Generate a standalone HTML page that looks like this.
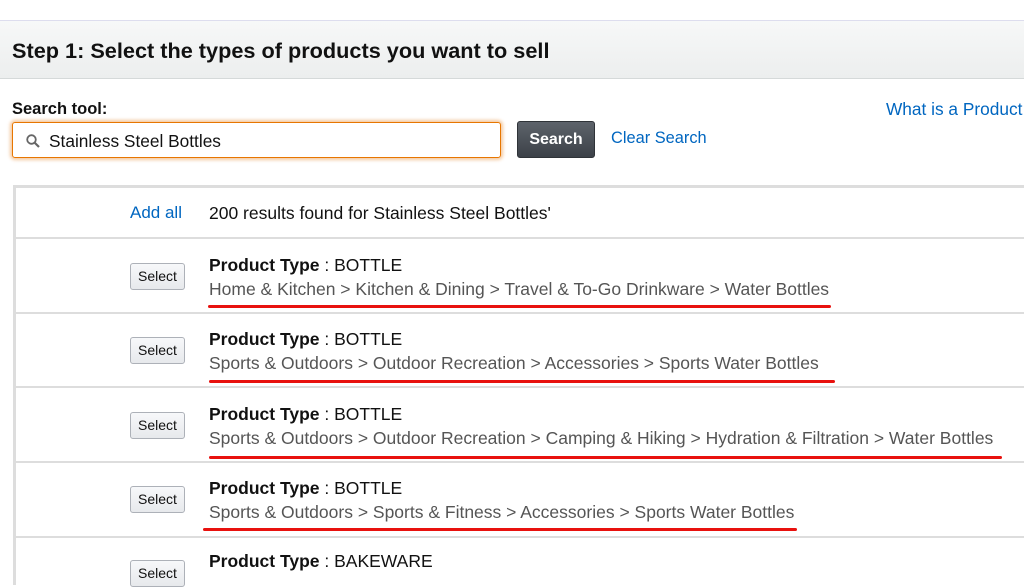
<!DOCTYPE html>
<html><head><meta charset="utf-8"><style>
*{margin:0;padding:0;box-sizing:border-box}
body{width:1024px;height:564px;overflow:hidden;background:#fff;font-family:"Liberation Sans",Arial,sans-serif;color:#111;position:relative}
.hdr{position:absolute;left:0;top:20px;width:1024px;height:59px;background:linear-gradient(#f7f8f8,#eceeee);border-top:1px solid #dde;border-bottom:1px solid #d5d9d9}
.hdr h1{position:absolute;left:12px;top:17px;font-size:21.7px;font-weight:bold;color:#111}
.lbl{position:absolute;left:12px;top:100px;font-size:16.5px;font-weight:bold}
.inp{position:absolute;left:12px;top:122px;width:489px;height:36px;border:1px solid #e77600;border-radius:3px;box-shadow:0 0 3px 2px rgba(228,121,17,.4)}
.inp span{position:absolute;left:36px;top:8px;font-size:17.3px}
.inp svg{position:absolute;left:13px;top:11px}
.btn{position:absolute;left:517px;top:121px;width:78px;height:37px;background:linear-gradient(#5d636b,#3c4148);border:1px solid #2f3338;border-radius:3px;color:#fff;font-weight:bold;font-size:16px;text-align:center;line-height:35px}
.link{position:absolute;color:#0066c0;font-size:17px}
.tbl{position:absolute;left:13px;top:185px;width:1020px;height:400px;border-left:3px solid #ddd;border-top:3px solid #ddd}
.row{position:absolute;left:16px;width:1010px;border-bottom:2px solid #ddd}
.sel{position:absolute;left:130px;width:55px;height:27px;background:linear-gradient(#f7f8fa,#e7e9ec);border:1px solid #adb1b8;border-radius:3px;font-size:14px;text-align:center;line-height:25px;color:#111}
.pt{position:absolute;left:209px;font-size:17.5px}
.cat{position:absolute;left:209px;font-size:17.5px;color:#555}
.red{position:absolute;height:3px;background:#e8110e;border-radius:2px}
</style></head><body>
<div class="hdr"><h1>Step 1: Select the types of products you want to sell</h1></div>
<div class="lbl">Search tool:</div>
<div class="link" style="left:886px;top:99px;font-size:17.3px">What is a Product</div>
<div class="inp"><svg width="14" height="14" viewBox="0 0 14 14"><circle cx="5.5" cy="5.5" r="4.3" fill="none" stroke="#666" stroke-width="1.8"/><path d="M8.6 8.6L13 13" stroke="#666" stroke-width="2.2"/></svg><span>Stainless Steel Bottles</span></div>
<div class="btn">Search</div>
<div class="link" style="left:611px;top:129px;font-size:16.4px">Clear Search</div>
<div class="tbl"></div>
<div class="row" style="top:188px;height:51px"></div>
<div class="link" style="left:130px;top:203px">Add all</div>
<div style="position:absolute;left:209px;top:203px;font-size:17.5px">200 results found for Stainless Steel Bottles'</div>
<div class="row" style="top:239px;height:75px"></div>
<div class="row" style="top:314px;height:74px"></div>
<div class="row" style="top:388px;height:75px"></div>
<div class="row" style="top:463px;height:75px"></div>

<div class="sel" style="top:263px">Select</div>
<div class="pt" style="top:255px"><b>Product Type</b> : BOTTLE</div>
<div class="cat" style="top:279px">Home &amp; Kitchen &gt; Kitchen &amp; Dining &gt; Travel &amp; To-Go Drinkware &gt; Water Bottles</div>
<div class="red" style="left:208px;top:305px;width:623px"></div>

<div class="sel" style="top:337px">Select</div>
<div class="pt" style="top:329px"><b>Product Type</b> : BOTTLE</div>
<div class="cat" style="top:353px">Sports &amp; Outdoors &gt; Outdoor Recreation &gt; Accessories &gt; Sports Water Bottles</div>
<div class="red" style="left:209px;top:380px;width:626px"></div>

<div class="sel" style="top:412px">Select</div>
<div class="pt" style="top:404px"><b>Product Type</b> : BOTTLE</div>
<div class="cat" style="top:428px">Sports &amp; Outdoors &gt; Outdoor Recreation &gt; Camping &amp; Hiking &gt; Hydration &amp; Filtration &gt; Water Bottles</div>
<div class="red" style="left:209px;top:456px;width:793px"></div>

<div class="sel" style="top:486px">Select</div>
<div class="pt" style="top:478px"><b>Product Type</b> : BOTTLE</div>
<div class="cat" style="top:502px">Sports &amp; Outdoors &gt; Sports &amp; Fitness &gt; Accessories &gt; Sports Water Bottles</div>
<div class="red" style="left:203px;top:528px;width:594px"></div>

<div class="sel" style="top:560px">Select</div>
<div class="pt" style="top:551px"><b>Product Type</b> : BAKEWARE</div>
</body></html>
